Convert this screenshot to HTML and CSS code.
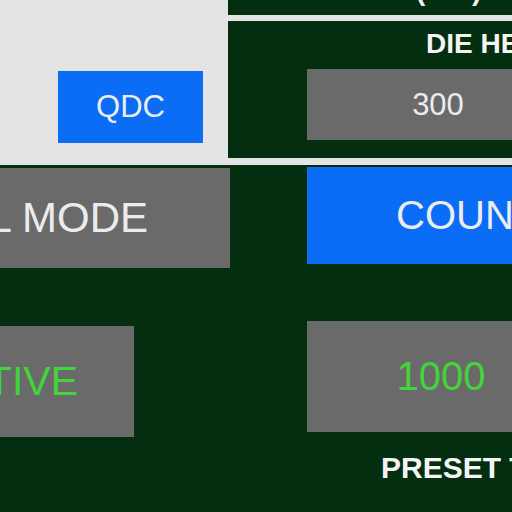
FILE: index.html
```html
<!DOCTYPE html>
<html>
<head>
<meta charset="utf-8">
<link rel="stylesheet" href="styles.css">
</head>
<body>
<div class="screen">
  <div class="top">
    <div class="left-panel">
      <div class="btn btn-blue qdc">QDC</div>
    </div>
    <div class="right-panel">
      <div class="box box-top"><span class="unit">(MM)</span></div>
      <div class="box box-main">
        <div class="label die-label">DIE HEIGHT</div>
        <div class="field field-300">300</div>
      </div>
    </div>
  </div>
  <div class="bottom">
    <div class="col-left">
      <div class="btn btn-grey mode"><span>MANUAL MODE</span></div>
      <div class="btn btn-grey active"><span>INACTIVE</span></div>
    </div>
    <div class="col-right">
      <div class="btn btn-blue count"><span>COUNTER</span></div>
      <div class="field field-1000">1000</div>
      <div class="label preset-label">PRESET TOTAL</div>
    </div>
  </div>
</div>
</body>
</html>
```

FILE: styles.css
```css
html, body {
  margin: 0;
  padding: 0;
  background: #032e10;
  overflow: hidden;
}
.screen {
  width: 512px;
  height: 512px;
  overflow: hidden;
  font-family: "Liberation Sans", Arial, sans-serif;
  background: #032e10;
}
.top {
  display: flex;
  height: 165px;
  background: #e4e4e4;
}
.left-panel {
  width: 228px;
  flex: none;
  padding: 71px 0 0 58px;
  box-sizing: border-box;
}
.btn {
  display: flex;
  align-items: center;
  white-space: nowrap;
  overflow: hidden;
  color: #ececec;
  box-sizing: border-box;
}
.btn-blue { background: #0b6df5; }
.btn-grey { background: #6a6a6a; }
.qdc {
  width: 145px;
  height: 72px;
  justify-content: center;
  font-size: 31px;
}
.right-panel {
  flex: 1;
  display: flex;
  flex-direction: column;
  gap: 6px;
  padding-bottom: 7px;
  min-width: 0;
}
.box {
  background: #032e10;
  overflow: hidden;
  white-space: nowrap;
}
.box-top {
  height: 15px;
  flex: none;
}
.unit {
  display: block;
  margin: -26px 0 0 188px;
  font-size: 28px;
  font-weight: bold;
  line-height: 34px;
  color: #f2f2f2;
}
.box-main {
  flex: 1;
  padding: 8px 0 0 79px;
}
.label {
  font-weight: bold;
  color: #f4f4f4;
  white-space: nowrap;
}
.die-label {
  font-size: 28px;
  line-height: 30px;
  padding-left: 119px;
}
.field {
  background: #6a6a6a;
  display: flex;
  align-items: center;
  justify-content: center;
  width: 262px;
  box-sizing: border-box;
}
.field-300 {
  margin-top: 10px;
  height: 71px;
  font-size: 31px;
  color: #ececec;
}
.bottom {
  display: flex;
}
.col-left {
  width: 230px;
  flex: none;
  display: flex;
  flex-direction: column;
  align-items: flex-start;
  padding-top: 3px;
}
.mode {
  width: 230px;
  height: 100px;
  justify-content: flex-end;
  padding-right: 82px;
  font-size: 42px;
}
.active {
  width: 134px;
  height: 111px;
  margin-top: 58px;
  justify-content: flex-end;
  padding-right: 56px;
  font-size: 41px;
  color: #43d33a;
}
.col-right {
  margin-left: 77px;
  display: flex;
  flex-direction: column;
  padding-top: 2px;
}
.count {
  width: 262px;
  height: 97px;
  padding-left: 89px;
  font-size: 40px;
}
.field-1000 {
  margin-top: 57px;
  height: 111px;
  padding-left: 6px;
  font-size: 40px;
  color: #43d33a;
}
.preset-label {
  margin-top: 20px;
  padding-left: 74px;
  font-size: 30px;
  line-height: 32px;
}
```
